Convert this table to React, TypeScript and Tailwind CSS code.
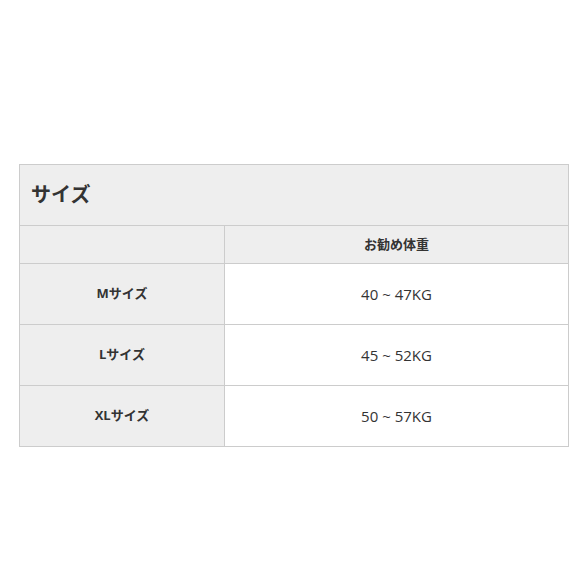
const rows = [
  { label: "Mサイズ", weight: "40 ~ 47KG" },
  { label: "Lサイズ", weight: "45 ~ 52KG" },
  { label: "XLサイズ", weight: "50 ~ 57KG" },
];

export default function App() {
  return (
    <div
      className="min-h-[588px] bg-white pt-[164px] px-[19px] text-[#333]"
      style={{ fontFamily: '"Open Sans", "Noto Sans CJK JP", sans-serif' }}
    >
      <div className="w-[550px] border border-[#ccc]">
        <div className="flex h-[61px] items-center border-b border-[#ccc] bg-[#eee] pl-[11px] text-[20px] font-bold">
          サイズ
        </div>
        <div className="grid h-[38px] grid-cols-[205px_1fr] border-b border-[#ccc]">
          <div className="border-r border-[#ccc] bg-[#eee]" />
          <div className="flex items-center justify-center bg-[#eee] text-[13px] font-bold">
            お勧め体重
          </div>
        </div>
        {rows.map((row, i) => (
          <div
            key={row.label}
            className={
              i < rows.length - 1
                ? "grid h-[61px] grid-cols-[205px_1fr] border-b border-[#ccc]"
                : "grid h-[60px] grid-cols-[205px_1fr]"
            }
          >
            <div className="flex items-center justify-center border-r border-[#ccc] bg-[#eee] text-[13px] font-bold">
              {row.label}
            </div>
            <div className="flex items-center justify-center text-[15px]">
              {row.weight}
            </div>
          </div>
        ))}
      </div>
    </div>
  );
}
